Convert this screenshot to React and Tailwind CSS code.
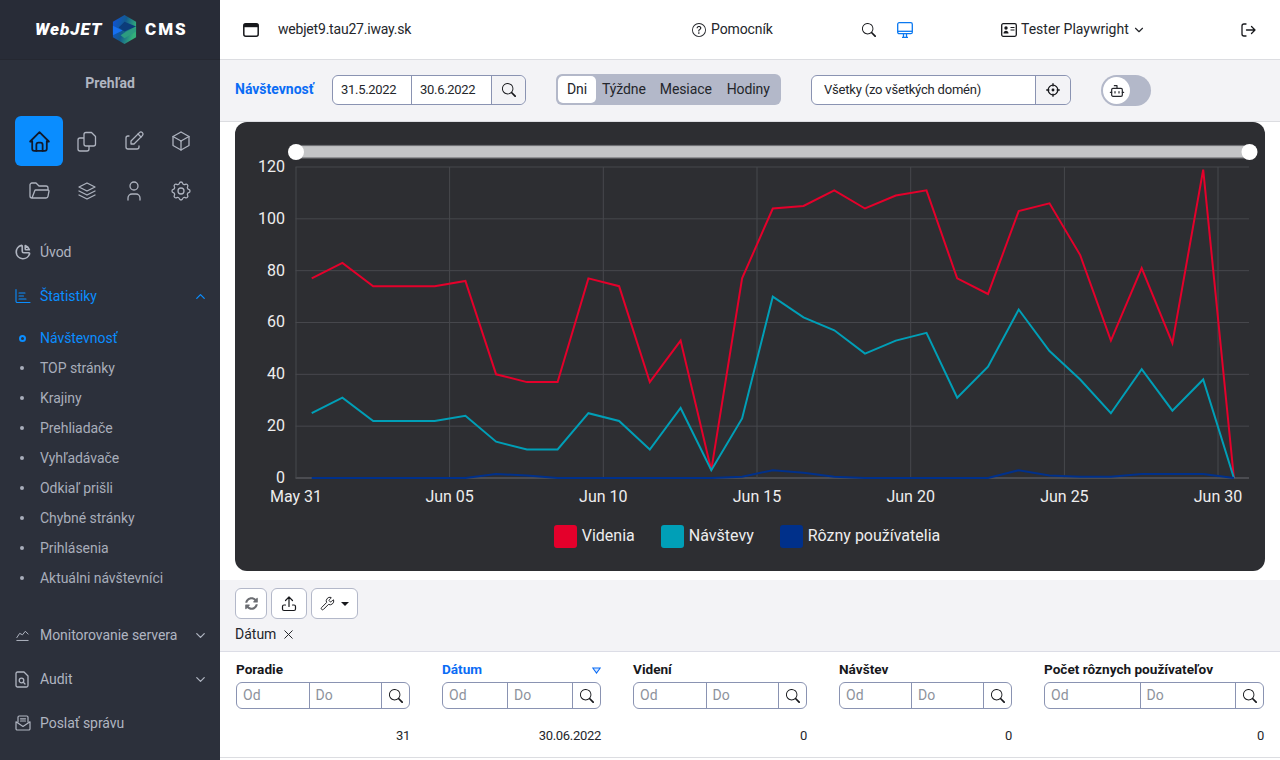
import React from "react";
import { TbHome, TbEdit, TbBox, TbFolderOpen, TbStack2, TbUser, TbSettings, TbChartPie, TbChartLine, TbChevronUp, TbChevronDown, TbX } from "react-icons/tb";
import { BsSearch, BsQuestionCircle } from "react-icons/bs";
import { FaSyncAlt } from "react-icons/fa";
import { Wrench, Bot } from "lucide-react";

const red = [77,83,74,74,74,76,40,37,37,77,74,37,53,3,77,104,105,111,104,109,111,77,71,103,106,86,53,81,52,119,0];
const teal = [25,31,22,22,22,24,14,11,11,25,22,11,27,3,23,70,62,57,48,53,56,31,43,65,49,38,25,42,26,38,0];
const blue = [0,0,0,0,0,0,1.5,1,0,0,0,0,0,0,0.5,3,2,0.5,0,0,0,0,0,3,1,0.5,0.5,1.5,1.5,1.5,0];
const px = (i) => 311.7 + i * 30.74;
const py = (v) => 478 - v * 2.5917;
const pts = (a) => a.map((v, i) => `${px(i).toFixed(1)},${py(v).toFixed(1)}`).join(" ");

const FONT = { fontFamily: "Roboto, sans-serif" };

function Chart() {
  const ys = [0, 20, 40, 60, 80, 100, 120];
  const xs = [["May 31", 296], ["Jun 05", 449.6], ["Jun 10", 603.3], ["Jun 15", 757], ["Jun 20", 910.7], ["Jun 25", 1064.4], ["Jun 30", 1218]];
  return (
    <svg viewBox="235 122 1030 392" width="1030" height="392" className="block" style={{ fontFamily: "Roboto, sans-serif" }}>
      {ys.map((v) => (
        <line key={v} x1="295.5" x2="1249" y1={py(v)} y2={py(v)} stroke={v === 0 ? "#6a6b70" : "#47484d"} strokeWidth="1" />
      ))}
      {xs.map(([t, x]) => (
        <line key={t} x1={x} x2={x} y1="167" y2="478" stroke="#47484d" strokeWidth="1" />
      ))}
      {ys.map((v) => (
        <text key={v} x="285" y={py(v) + 5} textAnchor="end" fontSize="16" fill="#ededee">{v}</text>
      ))}
      {xs.map(([t, x]) => (
        <text key={t} x={x} y="502" textAnchor="middle" fontSize="16" fill="#ededee">{t}</text>
      ))}
      <polyline points={pts(red)} fill="none" stroke="#e4002b" strokeWidth="2" />
      <polyline points={pts(teal)} fill="none" stroke="#009fb7" strokeWidth="2" />
      <polyline points={pts(blue)} fill="none" stroke="#00308a" strokeWidth="2" />
      <rect x="296" y="145.5" width="953" height="12.5" fill="#c3c4c6" stroke="#6f7074" strokeWidth="1.2" />
      <circle cx="296" cy="152" r="8" fill="#ffffff" />
      <circle cx="1249.5" cy="152" r="8" fill="#ffffff" />
    </svg>
  );
}

function Logo() {
  return (
    <div className="h-[60px] bg-[#282c37] border-b border-[#252831] flex items-center pl-[35px] shrink-0">
      <span className="w-[69px] text-white italic font-black text-[17px] leading-none tracking-[1px]" style={FONT}>WebJET</span>
      <svg width="27" height="31" viewBox="0 0 28 32" className="ml-[7px]">
        <defs>
          <linearGradient id="lg" x1="0" x2="1" y1="0" y2="0.4">
            <stop offset="0" stopColor="#0f52e0" />
            <stop offset="0.55" stopColor="#135a8c" />
            <stop offset="1" stopColor="#33b07a" />
          </linearGradient>
        </defs>
        <polygon points="14,1 26,8 26,24 14,31 2,24 2,8" fill="url(#lg)" />
        <polygon points="2,12 12,17 2,22" fill="#1670f0" />
        <polygon points="14,8 26,13 14,18 8,14" fill="#0c3c7a" />
        <polygon points="26,18 14,25 10,22 16,18 26,14" fill="#2c9c80" />
      </svg>
      <span className="ml-[7px] text-white font-black text-[17px] leading-none tracking-[2px]" style={FONT}>CMS</span>
    </div>
  );
}

const StatsIcon = () => (
  <svg width="16" height="16" viewBox="0 0 16 16" fill="none" stroke="currentColor" strokeWidth="1.1" strokeLinecap="round">
    <path d="M1 1.5V13.2a1.3 1.3 0 0 0 1.3 1.3H15" />
    <path d="M4 5h6M4 8h4.5M4 11h7" />
  </svg>
);

const CopyIcon = () => (
  <svg width="24" height="24" viewBox="0 0 24 24" fill="none" stroke="currentColor" strokeWidth="1.3" strokeLinejoin="round">
    <path d="M11 3.5h5.5L20.5 7.5V15a2 2 0 0 1-2 2H11a2 2 0 0 1-2-2V5.5a2 2 0 0 1 2-2z" />
    <path d="M9 9H5a2 2 0 0 0-2 2v9a2 2 0 0 0 2 2h7a2 2 0 0 0 2-2v-3" />
  </svg>
);

const AuditIcon = () => (
  <svg width="14" height="17" viewBox="0 0 14 17" fill="none" stroke="currentColor" strokeWidth="1.3" strokeLinejoin="round" strokeLinecap="round">
    <path d="M2.5 1H9l4 4v9.5a1.5 1.5 0 0 1-1.5 1.5h-9A1.5 1.5 0 0 1 1 14.500V2.500A1.500 1.500 0 0 1 2.500 1z" />
    <circle cx="6.500" cy="9.500" r="2.300" />
    <path d="M8.300 11.300l1.700 1.700" />
  </svg>
);

const MailIcon = () => (
  <svg width="16" height="16" viewBox="0 0 16 16" fill="none" stroke="currentColor" strokeWidth="1.200" strokeLinejoin="round" strokeLinecap="round">
    <path d="M3 7V2.200A1.200 1.200 0 0 1 4.200 1h7.600A1.200 1.200 0 0 1 13 2.200V7" />
    <path d="M5.500 3.800h5M5.500 6h5" />
    <path d="M1 6.800l7 4.700 7-4.700v7A1.200 1.200 0 0 1 13.800 15H2.200A1.200 1.200 0 0 1 1 13.800z" />
  </svg>
);

function SideRow({ icon, label, active, chev }) {
  return (
    <div className={`h-[44px] flex items-center pl-[15px] pr-[12px] text-[14px] ${active ? "text-[#0a8dff]" : "text-[#b0b5c1]"}`}>
      <span className="w-[25px] flex items-center shrink-0">{icon}</span>
      <span className="flex-1 tracking-[-0.05px]">{label}</span>
      {chev === "up" && <TbChevronUp size={15} />}
      {chev === "down" && <TbChevronDown size={15} />}
    </div>
  );
}

function SubRow({ label, active }) {
  return (
    <div className={`h-[30px] flex items-center pl-[19px] text-[14px] ${active ? "text-[#0a8dff]" : "text-[#a8adba]"}`}>
      <span className="w-[21px] flex items-center shrink-0">
        {active ? (
          <span className="w-[7px] h-[7px] rounded-full border-2 border-[#0a8dff] -ml-[0.5px]" />
        ) : (
          <span className="w-[4px] h-[4px] rounded-full bg-[#a8adba] ml-[1px]" />
        )}
      </span>
      <span className="tracking-[-0.05px]">{label}</span>
    </div>
  );
}

function Sidebar() {
  const apps = [CopyIcon, TbEdit, TbBox, TbFolderOpen, TbStack2, TbUser, TbSettings];
  return (
    <aside className="w-[220px] h-[760px] bg-[#2c303b] shrink-0 flex flex-col overflow-hidden">
      <Logo />
      <div className="h-[46px] flex items-center justify-center text-[14px] font-bold text-[#b0b5c1] pt-[1px]">Prehľad</div>
      <div className="grid grid-cols-[48px_47px_47px_48px] auto-rows-[50px] mx-[15px] mt-[10px]">
        <div className="bg-[#0a8dff] rounded-[6px] flex items-center justify-center text-[#10192b]">
          <TbHome size={25} strokeWidth={1.7} />
        </div>
        {apps.map((I, i) => (
          <div key={i} className="flex items-center justify-center text-[#aeb3bf]">
            <I size={24} strokeWidth={1.3} />
          </div>
        ))}
      </div>
      <div className="mt-[14px]">
        <SideRow icon={<TbChartPie size={18} strokeWidth={2.2} className="-ml-[1px]" />} label="Úvod" />
        <SideRow icon={<StatsIcon />} label="Štatistiky" active chev="up" />
      </div>
      <div className="mt-[5px]">
        <SubRow label="Návštevnosť" active />
        {["TOP stránky", "Krajiny", "Prehliadače", "Vyhľadávače", "Odkiaľ prišli", "Chybné stránky", "Prihlásenia", "Aktuálni návštevníci"].map((s) => (
          <SubRow key={s} label={s} />
        ))}
      </div>
      <div className="mt-[20px]">
        <SideRow icon={<TbChartLine size={17} strokeWidth={1.4} className="-ml-[1px]" />} label="Monitorovanie servera" chev="down" />
        <SideRow icon={<AuditIcon />} label="Audit" chev="down" />
        <SideRow icon={<MailIcon />} label="Poslať správu" />
      </div>
    </aside>
  );
}

function Header() {
  return (
    <header className="h-[60px] bg-white border-b border-[#dcdde1] flex items-center text-[14px] text-[#24262b] shrink-0">
      <svg width="16" height="14" viewBox="0 0 16 14" className="ml-[23px]" fill="none">
        <rect x="0.8" y="0.8" width="14.4" height="12.4" rx="2" stroke="#17181c" strokeWidth="1.5" />
        <rect x="0.8" y="0.8" width="14.4" height="3.4" fill="#17181c" />
      </svg>
      <span className="ml-[19px] w-[414px] tracking-[-0.2px]">webjet9.tau27.iway.sk</span>
      <BsQuestionCircle size={14} />
      <span className="ml-[5px] w-[151px] tracking-[-0.1px]">Pomocník</span>
      <BsSearch size={14} className="text-[#17181c]" />
      <svg width="16" height="16" viewBox="0 0 16 16" className="ml-[21px] text-[#0a78f0]" fill="none" stroke="currentColor">
        <rect x="0.7" y="0.7" width="14.600" height="11" rx="1.500" strokeWidth="1.300" />
        <path d="M1 9.300h14" strokeWidth="1.300" />
        <path d="M5 15.300h6M6.500 12v3M9.500 12v3" strokeWidth="1.300" />
      </svg>
      <svg width="16" height="14" viewBox="0 0 16 14" className="ml-[88px] text-[#17181c]" fill="none">
        <rect x="0.700" y="0.700" width="14.600" height="12.600" rx="1.500" stroke="currentColor" strokeWidth="1.300" />
        <circle cx="5" cy="5" r="1.700" fill="currentColor" />
        <path d="M2.500 10.500c0-2 1.200-2.800 2.500-2.800s2.500.8 2.500 2.800z" fill="currentColor" />
        <path d="M9.500 4.500h4M9.500 7h4" stroke="currentColor" strokeWidth="1.200" />
      </svg>
      <span className="ml-[4px]">Tester Playwright</span>
      <TbChevronDown size={14} className="ml-[3px]" />
      <svg width="15" height="14" viewBox="0 0 15 14" className="ml-[95px] text-[#17181c]" fill="none" stroke="currentColor" strokeWidth="1.300" strokeLinecap="round" strokeLinejoin="round">
        <path d="M5 1H3a2 2 0 0 0-2 2v8a2 2 0 0 0 2 2h2" />
        <path d="M5.500 7H14M10.500 3.500L14 7l-3.500 3.500" />
      </svg>
    </header>
  );
}

function Toolbar() {
  return (
    <div className="h-[62px] bg-[#f3f3f6] border-b border-[#dcdde1] flex items-center pl-[15px] pb-[2px] text-[13px] text-[#24262b] shrink-0">
      <span className="w-[97px] font-bold text-[14px] text-[#0a6cf5]">Návštevnosť</span>
      <div className="w-[194px] h-[30px] flex bg-white border border-[#8a93b2] rounded-[6px] tracking-[-0.3px]">
        <span className="w-[79px] flex items-center pl-[8px] border-r border-[#8a93b2]">31.5.2022</span>
        <span className="w-[80px] flex items-center pl-[8px] border-r border-[#8a93b2]">30.6.2022</span>
        <span className="flex-1 flex items-center justify-center bg-[#f3f3f6] rounded-r-[6px]"><BsSearch size={14} className="text-[#17181c]" /></span>
      </div>
      <div className="ml-[30px] w-[225px] h-[31px] bg-[#b3b8c9] rounded-[6px] flex items-center p-[2px] text-[14px] tracking-[-0.1px]">
        <span className="w-[38px] h-[27px] bg-white rounded-[5px] flex items-center justify-center">Dni</span>
        <span className="ml-[6px]">Týždne</span>
        <span className="ml-[14px]">Mesiace</span>
        <span className="ml-[15px]">Hodiny</span>
      </div>
      <div className="ml-[30px] w-[260px] h-[30px] flex bg-white border border-[#8a93b2] rounded-[6px]">
        <span className="w-[224px] flex items-center pl-[12px] border-r border-[#8a93b2] tracking-[-0.2px]">Všetky (zo všetkých domén)</span>
        <span className="flex-1 flex items-center justify-center bg-[#f3f3f6] rounded-r-[6px]">
          <svg width="14" height="14" viewBox="0 0 14 14" fill="none" stroke="#17181c" strokeWidth="1.300" strokeLinecap="round">
            <circle cx="7" cy="7" r="4.800" />
            <circle cx="7" cy="7" r="0.800" fill="#17181c" />
            <path d="M7 0.700v2.200M7 11.100v2.200M0.700 7h2.200M11.100 7h2.200" />
          </svg>
        </span>
      </div>
      <div className="ml-[30px] mt-[2px] w-[50px] h-[31px] bg-[#b3b8c9] rounded-full flex items-center pl-[2px]">
        <span className="w-[27px] h-[27px] bg-white rounded-full flex items-center justify-center"><Bot size={16} strokeWidth={1.8} className="text-[#26282d]" /></span>
      </div>
    </div>
  );
}

function Legend({ color, label }) {
  return (
    <div className="flex items-center gap-[5px] text-[16px] text-[#ededee]">
      <span className="w-[23px] h-[23px] rounded-[3px]" style={{ background: color }} />
      <span>{label}</span>
    </div>
  );
}

function Tool({ children, w }) {
  return (
    <span className={`${w} h-[31px] bg-white border border-[#b3b8c9] rounded-[6px] flex items-center justify-center`}>{children}</span>
  );
}

function Filter() {
  return (
    <div className="h-[27px] flex bg-white border border-[#8a93b2] rounded-[6px] text-[14px] text-[#8d929c]">
      <span className="flex-1 flex items-center pl-[6px] border-r border-[#8a93b2]">Od</span>
      <span className="flex-1 flex items-center pl-[6px] border-r border-[#8a93b2]">Do</span>
      <span className="w-[27px] flex items-center justify-center text-[#17181c] shrink-0"><BsSearch size={14} /></span>
    </div>
  );
}

function Table() {
  const cols = [
    ["Poradie", "31"],
    ["Dátum", "30.06.2022", true],
    ["Videní", "0"],
    ["Návštev", "0"],
    ["Počet rôznych používateľov", "0"],
  ];
  return (
    <div className="border-t border-[#dcdde6] bg-white">
      <div className="grid grid-cols-[206px_191px_206px_205px_252px] h-[106px] border-b border-[#dcdde1]">
        {cols.map(([h, v, act]) => (
          <div key={h} className="px-[16px] pt-[6px]">
            <div className={`relative h-[22px] mb-[2px] flex items-center text-[13.6px] font-bold ${act ? "text-[#0a6cf5]" : "text-[#17181c]"}`}>
              {h}
              {act && (
                <svg width="9" height="7" viewBox="0 0 9 7" className="absolute right-0 top-[9px]" fill="none">
                  <path d="M0.8 1h7.4L4.5 6z" stroke="#0a6cf5" strokeWidth="1.1" fill="#d6e6ff" />
                </svg>
              )}
            </div>
            <Filter />
            <div className="mt-[17px] text-right text-[13px] tracking-[-0.3px] text-[#24262b] h-[20px] flex items-center justify-end">{v}</div>
          </div>
        ))}
      </div>
    </div>
  );
}

export default function App() {
  return (
    <div className="w-[1280px] h-[760px] flex overflow-hidden bg-white" style={FONT}>
      <Sidebar />
      <main className="flex-1 min-w-0 flex flex-col">
        <Header />
        <Toolbar />
        <div className="h-[458px] px-[15px] shrink-0">
          <div className="h-[449px] bg-[#2d2e32] rounded-[12px]">
            <Chart />
            <div className="flex justify-center gap-[26px] mt-[10px] -translate-x-[3px]">
              <Legend color="#e4002b" label="Videnia" />
              <Legend color="#009fb7" label="Návštevy" />
              <Legend color="#00308a" label="Rôzny používatelia" />
            </div>
          </div>
        </div>
        <div className="h-[71px] bg-[#f3f3f6] px-[15px] pt-[8px] shrink-0">
          <div className="flex gap-[4px]">
            <Tool w="w-[32px]"><FaSyncAlt size={13} className="text-[#6b6d72]" /></Tool>
            <Tool w="w-[36px]">
              <svg width="16" height="16" viewBox="0 0 16 16" fill="none" stroke="#17181c" strokeWidth="1.200" strokeLinecap="round" strokeLinejoin="round">
                <path d="M8 10.500V1.200M4.500 4.500L8 1l3.500 3.500" />
                <path d="M4.500 9H3a1.500 1.500 0 0 0-1.500 1.500v2.500a1.500 1.500 0 0 0 1.500 1.500h10a1.500 1.500 0 0 0 1.500-1.500v-2.500A1.500 1.500 0 0 0 13 9h-1.500" />
              </svg>
            </Tool>
            <Tool w="w-[47px]">
              <Wrench size={15} strokeWidth={1.5} className="text-[#17181c]" />
              <span className="ml-[6px] w-0 h-0 border-x-[4px] border-x-transparent border-t-[4px] border-t-[#17181c]" />
            </Tool>
          </div>
          <div className="mt-[5px] flex items-center text-[14px] text-[#24262b]">
            Dátum <TbX size={15} strokeWidth={1.6} className="ml-[5px]" />
          </div>
        </div>
        <Table />
      </main>
    </div>
  );
}
